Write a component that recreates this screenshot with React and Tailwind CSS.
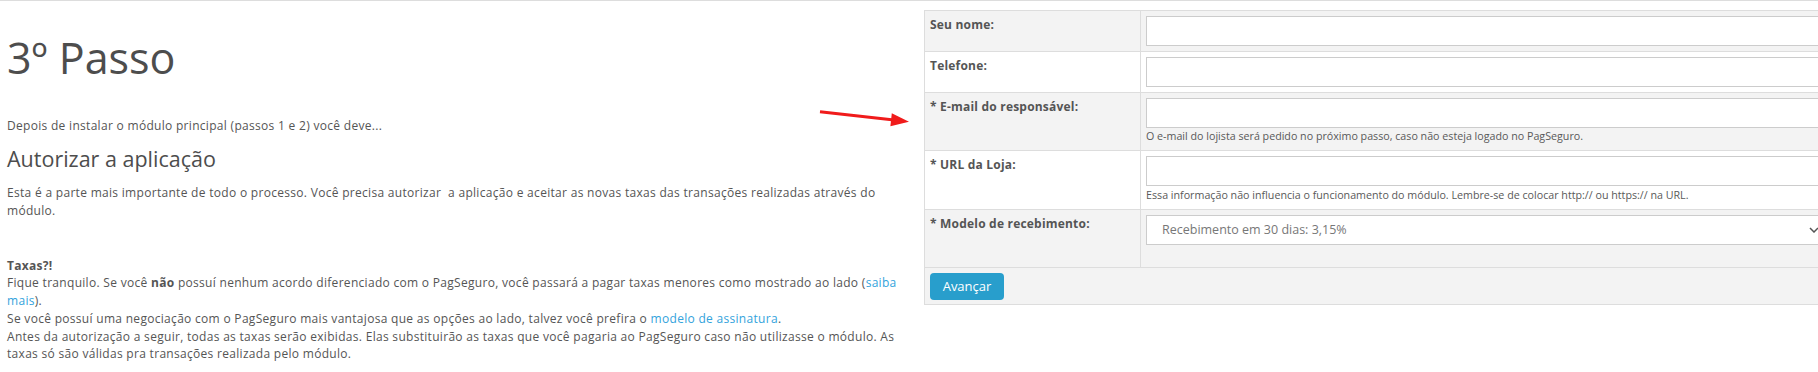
const linkCls = 'text-[#33a3dc]';

function Row({ label, striped, help, helpLeading = 'leading-[17px]', spacer, children }) {
  return (
    <div className={`flex border-b border-[#ddd] ${striped ? 'bg-[#f3f3f3]' : 'bg-white'}`}>
      <div className="w-[216px] shrink-0 border-r border-[#ddd] px-[5px] pt-[5px] font-bold leading-[18px] tracking-[0.2px]">
        {label}
      </div>
      <div className="min-w-0 flex-1 p-[5px]">
        {children || <div className="h-[30px] border border-[#ccc] bg-white" />}
        {help && <div className={`text-[10.7px] text-[#595959] ${helpLeading}`}>{help}</div>}
        {spacer && <div className="h-[17px]" />}
      </div>
    </div>
  );
}

export default function App() {
  return (
    <div className="relative h-[372px] w-[1818px] overflow-hidden border-t border-[#ddd] bg-white font-['Open_Sans',sans-serif] text-[#555]">
      <div className="flex">

        {/* Left column: instructions */}
        <div className="w-[924px] shrink-0 pl-[7px] pr-[19px]">
          <h1 className="mt-[32px] text-[43px] leading-[50px] text-[#4d4d4d]">3º Passo</h1>
          <p className="mt-[34px] text-[12px] leading-[18px] tracking-[0.3px]">
            Depois de instalar o módulo principal (passos 1 e 2) você deve...
          </p>
          <h3 className="mt-[9px] text-[21.5px] leading-[30px] text-[#4d4d4d]">Autorizar a aplicação</h3>
          <p className="mt-[10px] text-[12px] leading-[17.75px] tracking-[0.3px]">
            Esta é a parte mais importante de todo o processo. Você precisa autorizar{'\u00a0'} a aplicação e aceitar as novas taxas das transações realizadas através do módulo.
          </p>
          <div className="mt-[37px] text-[12px] leading-[17.75px] tracking-[0.3px]">
            <div className="font-bold">Taxas?!</div>
            <div>
              Fique tranquilo. Se você <b>não</b> possuí nenhum acordo diferenciado com o PagSeguro, você passará a pagar taxas menores como mostrado ao lado (<span className={linkCls}>saiba mais</span>).
            </div>
            <div>
              Se você possuí uma negociação com o PagSeguro mais vantajosa que as opções ao lado, talvez você prefira o <span className={linkCls}>modelo de assinatura</span>.
            </div>
            <div>
              Antes da autorização a seguir, todas as taxas serão exibidas. Elas substituirão as taxas que você pagaria ao PagSeguro caso não utilizasse o módulo. As taxas só são válidas pra transações realizada pelo módulo.
            </div>
          </div>
        </div>

        {/* Right column: form table */}
        <div className="pt-[9px]">
          <div className="w-[912px] border border-[#ddd] text-[12px]">
            <Row label="Seu nome:" striped />
            <Row label="Telefone:" />
            <Row
              label="* E-mail do responsável:"
              striped
              help="O e-mail do lojista será pedido no próximo passo, caso não esteja logado no PagSeguro."
            />
            <Row
              label="* URL da Loja:"
              helpLeading="leading-[18px]"
              help="Essa informação não influencia o funcionamento do módulo. Lembre-se de colocar http:// ou https:// na URL."
            />
            <Row label="* Modelo de recebimento:" striped spacer>
              <div className="relative flex h-[30px] items-center border border-[#ccc] bg-white pl-[15px] text-[12.5px] text-[#777]">
                Recebimento em 30 dias: 3,15%
                <svg className="absolute right-[10px] top-[11px]" width="10" height="6" viewBox="0 0 10 6">
                  <path d="M1 1l4 4 4-4" fill="none" stroke="#555" strokeWidth="1.5" />
                </svg>
              </div>
            </Row>
            <div className="bg-[#f3f3f3] pb-[4px] pl-[5px] pt-[5px]">
              <button className="h-[27px] w-[74px] rounded-[4px] bg-[#289ecc] text-[13px] text-white">
                Avançar
              </button>
            </div>
          </div>
        </div>
      </div>

      {/* Red annotation arrow */}
      <svg className="absolute left-[810px] top-[99px]" width="110" height="35" viewBox="0 0 110 35">
        <line x1="10" y1="11.7" x2="84" y2="19.9" stroke="#f01b1b" strokeWidth="3" />
        <polygon points="99,21.7 81.8,13.2 80.4,26.2" fill="#f01b1b" />
      </svg>
    </div>
  );
}
